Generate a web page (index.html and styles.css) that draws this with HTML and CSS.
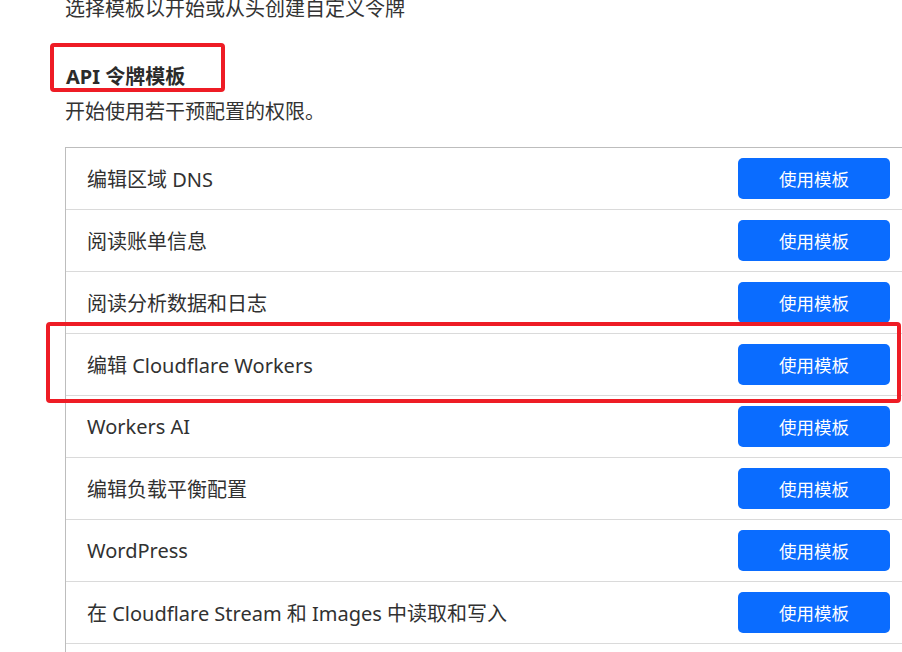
FILE: index.html
```html
<!DOCTYPE html>
<html lang="zh-CN">
<head>
<meta charset="utf-8">
<link rel="stylesheet" href="styles.css">
</head>
<body>
<main class="page">
  <p class="intro">选择模板以开始或从头创建自定义令牌</p>
  <section class="templates">
    <div class="heading-wrap">
      <h2 class="heading">API 令牌模板</h2>
      <span class="mark mark-heading"></span>
    </div>
    <p class="subtitle">开始使用若干预配置的权限。</p>
    <ul class="list">
      <li class="row"><span class="name">编辑区域 DNS</span><button class="btn">使用模板</button></li>
      <li class="row"><span class="name">阅读账单信息</span><button class="btn">使用模板</button></li>
      <li class="row"><span class="name">阅读分析数据和日志</span><button class="btn">使用模板</button></li>
      <li class="row row-marked"><span class="name">编辑 Cloudflare Workers</span><button class="btn">使用模板</button><span class="mark mark-row"></span></li>
      <li class="row"><span class="name">Workers AI</span><button class="btn">使用模板</button></li>
      <li class="row"><span class="name">编辑负载平衡配置</span><button class="btn">使用模板</button></li>
      <li class="row"><span class="name">WordPress</span><button class="btn">使用模板</button></li>
      <li class="row"><span class="name">在 Cloudflare Stream 和 Images 中读取和写入</span><button class="btn">使用模板</button></li>
      <li class="row"><span class="name"></span></li>
    </ul>
  </section>
</main>
</body>
</html>
```

FILE: styles.css
```css
html, body {
  margin: 0;
  padding: 0;
  background: #fff;
  overflow: hidden;
}
body {
  width: 902px;
  height: 652px;
  font-family: "Noto Sans", "Noto Sans CJK SC", sans-serif;
  color: #313131;
}
.page {
  padding-left: 65px;
}
.intro {
  margin: -6px 0 0 0;
  font-size: 20px;
  line-height: 30px;
  color: #333;
}
.heading-wrap {
  position: relative;
  margin-top: 38px;
}
.heading {
  margin: 0;
  padding-left: 1px;
  font-size: 20px;
  font-weight: 700;
  line-height: 30px;
  color: #2b2b2b;
}
.mark {
  position: absolute;
  border: 4px solid #ee1c25;
  border-radius: 4px;
  pointer-events: none;
}
.mark-heading {
  left: -15px;
  top: -19px;
  width: 167px;
  height: 41px;
}
.subtitle {
  margin: 5px 0 0 0;
  font-size: 20px;
  line-height: 30px;
  color: #333;
}
.list {
  list-style: none;
  margin: 20px 0 0 0;
  padding: 0;
  width: 880px;
  border-left: 1px solid #bdbdbd;
  border-top: 1px solid #bdbdbd;
}
.row {
  position: relative;
  display: flex;
  align-items: center;
  justify-content: space-between;
  height: 61px;
  padding: 0 56px 0 21px;
  border-bottom: 1px solid #dadada;
}
.name {
  font-size: 20px;
  color: #313131;
}
.btn {
  width: 152px;
  height: 41px;
  border: 0;
  border-radius: 5px;
  background: #0a6cff;
  color: #fff;
  font-family: "Noto Sans", "Noto Sans CJK SC", sans-serif;
  font-size: 17.5px;
  cursor: pointer;
}
.mark-row {
  left: -20px;
  top: -12px;
  width: 847px;
  height: 73px;
}
```
